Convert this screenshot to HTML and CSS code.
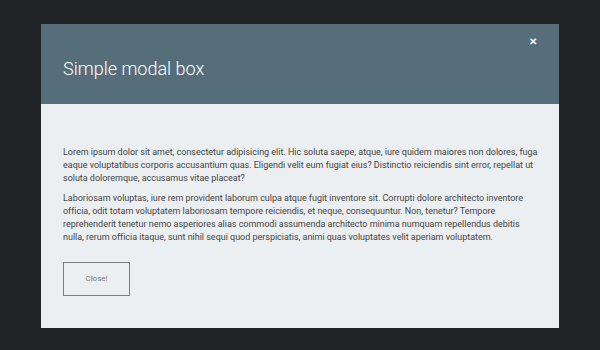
FILE: index.html
```html
<!DOCTYPE html>
<html lang="en">
<head>
  <meta charset="UTF-8" />
  <title>Simple modal box</title>
  <link rel="stylesheet" href="styles.css">
</head>
<body>
  <div class="modal">
    <div class="modal-header">
      <button class="modal-x" aria-label="Close">&#x2715;</button>
      <h1>Simple modal box</h1>
    </div>
    <div class="modal-body">
      <p>Lorem ipsum dolor sit amet, consectetur adipisicing elit. Hic soluta saepe, atque, iure quidem maiores non dolores, fuga eaque voluptatibus corporis accusantium quas. Eligendi velit eum fugiat eius? Distinctio reiciendis sint error, repellat ut soluta doloremque, accusamus vitae placeat?</p>
      <p>Laboriosam voluptas, iure rem provident laborum culpa atque fugit inventore sit. Corrupti dolore architecto inventore officia, odit totam voluptatem laboriosam tempore reiciendis, et neque, consequuntur. Non, tenetur? Tempore reprehenderit tenetur nemo asperiores alias commodi assumenda architecto minima numquam repellendus debitis nulla, rerum officia itaque, sunt nihil sequi quod perspiciatis, animi quas voluptates velit aperiam voluptatem.</p>
      <button class="btn-close">Close!</button>
    </div>
  </div>
</body>
</html>
```

FILE: styles.css
```css
body {
  margin: 0;
  height: 350px;
  background-color: #212528;
  font-family: Roboto, "Noto Sans", sans-serif;
  display: flex;
  align-items: center;
  justify-content: center;
}

.modal {
  width: 518px;
  margin-top: 1px;
  background-color: #eceff1;
}

.modal-header {
  position: relative;
  height: 80px;
  background-color: #566e7a;
  color: #fff;
  padding: 0 22px;
  box-sizing: border-box;
  display: flex;
  align-items: center;
}

.modal-header h1 {
  margin: 10px 0 0;
  font-size: 18px;
  font-weight: 300;
}

.modal-x {
  position: absolute;
  top: 10px;
  right: 20px;
  background: none;
  border: none;
  color: #fff;
  font-size: 10px;
  font-weight: bold;
  padding: 2px;
  cursor: pointer;
}

.modal-body {
  padding: 42px 18px 32px 22px;
}

.modal-body p {
  margin: 0 0 7px;
  font-size: 9px;
  line-height: 13px;
  letter-spacing: -0.02px;
  color: #444;
}

.btn-close {
  margin-top: 11px;
  width: 67px;
  height: 34px;
  background: transparent;
  border: 1px solid #7b7f82;
  color: #777;
  font-family: Roboto, sans-serif;
  font-size: 8px;
  cursor: pointer;
}
```
